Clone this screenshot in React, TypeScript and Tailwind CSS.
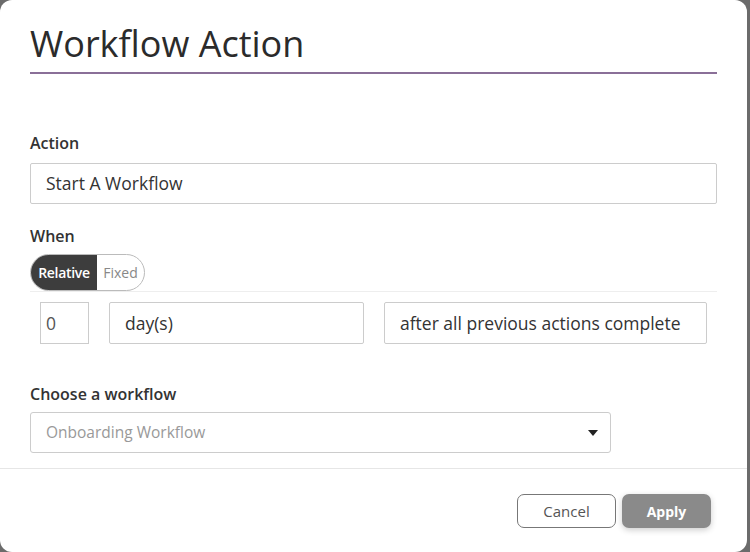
import React from 'react';

const font = { fontFamily: '"Open Sans", Lato, Arial, sans-serif' };

const App: React.FC = () => {
  return (
    <div className="h-[552px] w-[750px] overflow-hidden bg-[#6b6b6b]" style={font}>
      <div className="flex h-[552px] w-[747px] flex-col rounded-[12px] bg-white text-[#333]">
        {/* Header */}
        <div className="px-[30px] pt-[22px]">
          <h1 className="border-b-2 border-[#8a6f98] pb-[6px] text-[36px] leading-[44px] text-[#2b2b2b]">
            Workflow Action
          </h1>
        </div>

        {/* Body */}
        <div className="flex-1 px-[30px] pt-[59px]">
          <label className="block text-[16px] font-semibold leading-[20px]">Action</label>
          <div className="mt-[10px] flex h-[41px] items-center rounded-[2px] border border-[#ccc] px-[15px] text-[17.5px]">
            Start A Workflow
          </div>

          <label className="mt-[22px] block text-[16px] font-semibold leading-[20px]">When</label>
          <div className="mt-[8px] border-b border-[#eee]">
            <div className="flex h-[37px] w-[115px] overflow-hidden rounded-full border border-[#bbb] text-[14px]">
              <span className="flex w-[66px] items-center justify-center bg-[#3d3d3d] font-semibold tracking-[-0.3px] text-white">
                Relative
              </span>
              <span className="flex flex-1 items-center justify-center text-[#888]">Fixed</span>
            </div>
          </div>

          <div className="mt-[10px] flex gap-[20px] pl-[10px] text-[17.5px]">
            <div className="flex h-[42px] w-[49px] items-center border border-[#ccc] px-[5px] text-[#555]">0</div>
            <div className="flex h-[42px] w-[255px] items-center rounded-[2px] border border-[#ccc] px-[15px]">
              day(s)
            </div>
            <div className="flex h-[42px] w-[323px] items-center rounded-[2px] border border-[#ccc] px-[15px]">
              after all previous actions complete
            </div>
          </div>

          <label className="mt-[40px] block text-[16px] font-semibold leading-[20px]">Choose a workflow</label>
          <div className="mt-[8px] flex h-[41px] w-[581px] items-center justify-between rounded-[3px] border border-[#ccc] pl-[15px] pr-[12px] text-[15.5px] text-[#999]">
            <span>Onboarding Workflow</span>
            <svg width="10" height="6" viewBox="0 0 10 6">
              <path d="M0 0 L10 0 L5 6 Z" fill="#222" />
            </svg>
          </div>
        </div>

        {/* Footer */}
        <div className="flex h-[84px] items-start justify-end gap-[6px] border-t border-[#e6e6e6] pr-[36px] pt-[25px]">
          <button className="h-[34px] w-[99px] rounded-[7px] border border-[#777] bg-white text-[15px] text-[#555]">
            Cancel
          </button>
          <button className="h-[34px] w-[89px] rounded-[7px] bg-[#8a8a8a] text-[14px] font-bold text-white shadow-[0_2px_6px_rgba(0,0,0,0.2)]">
            Apply
          </button>
        </div>
      </div>
    </div>
  );
};

export default App;
